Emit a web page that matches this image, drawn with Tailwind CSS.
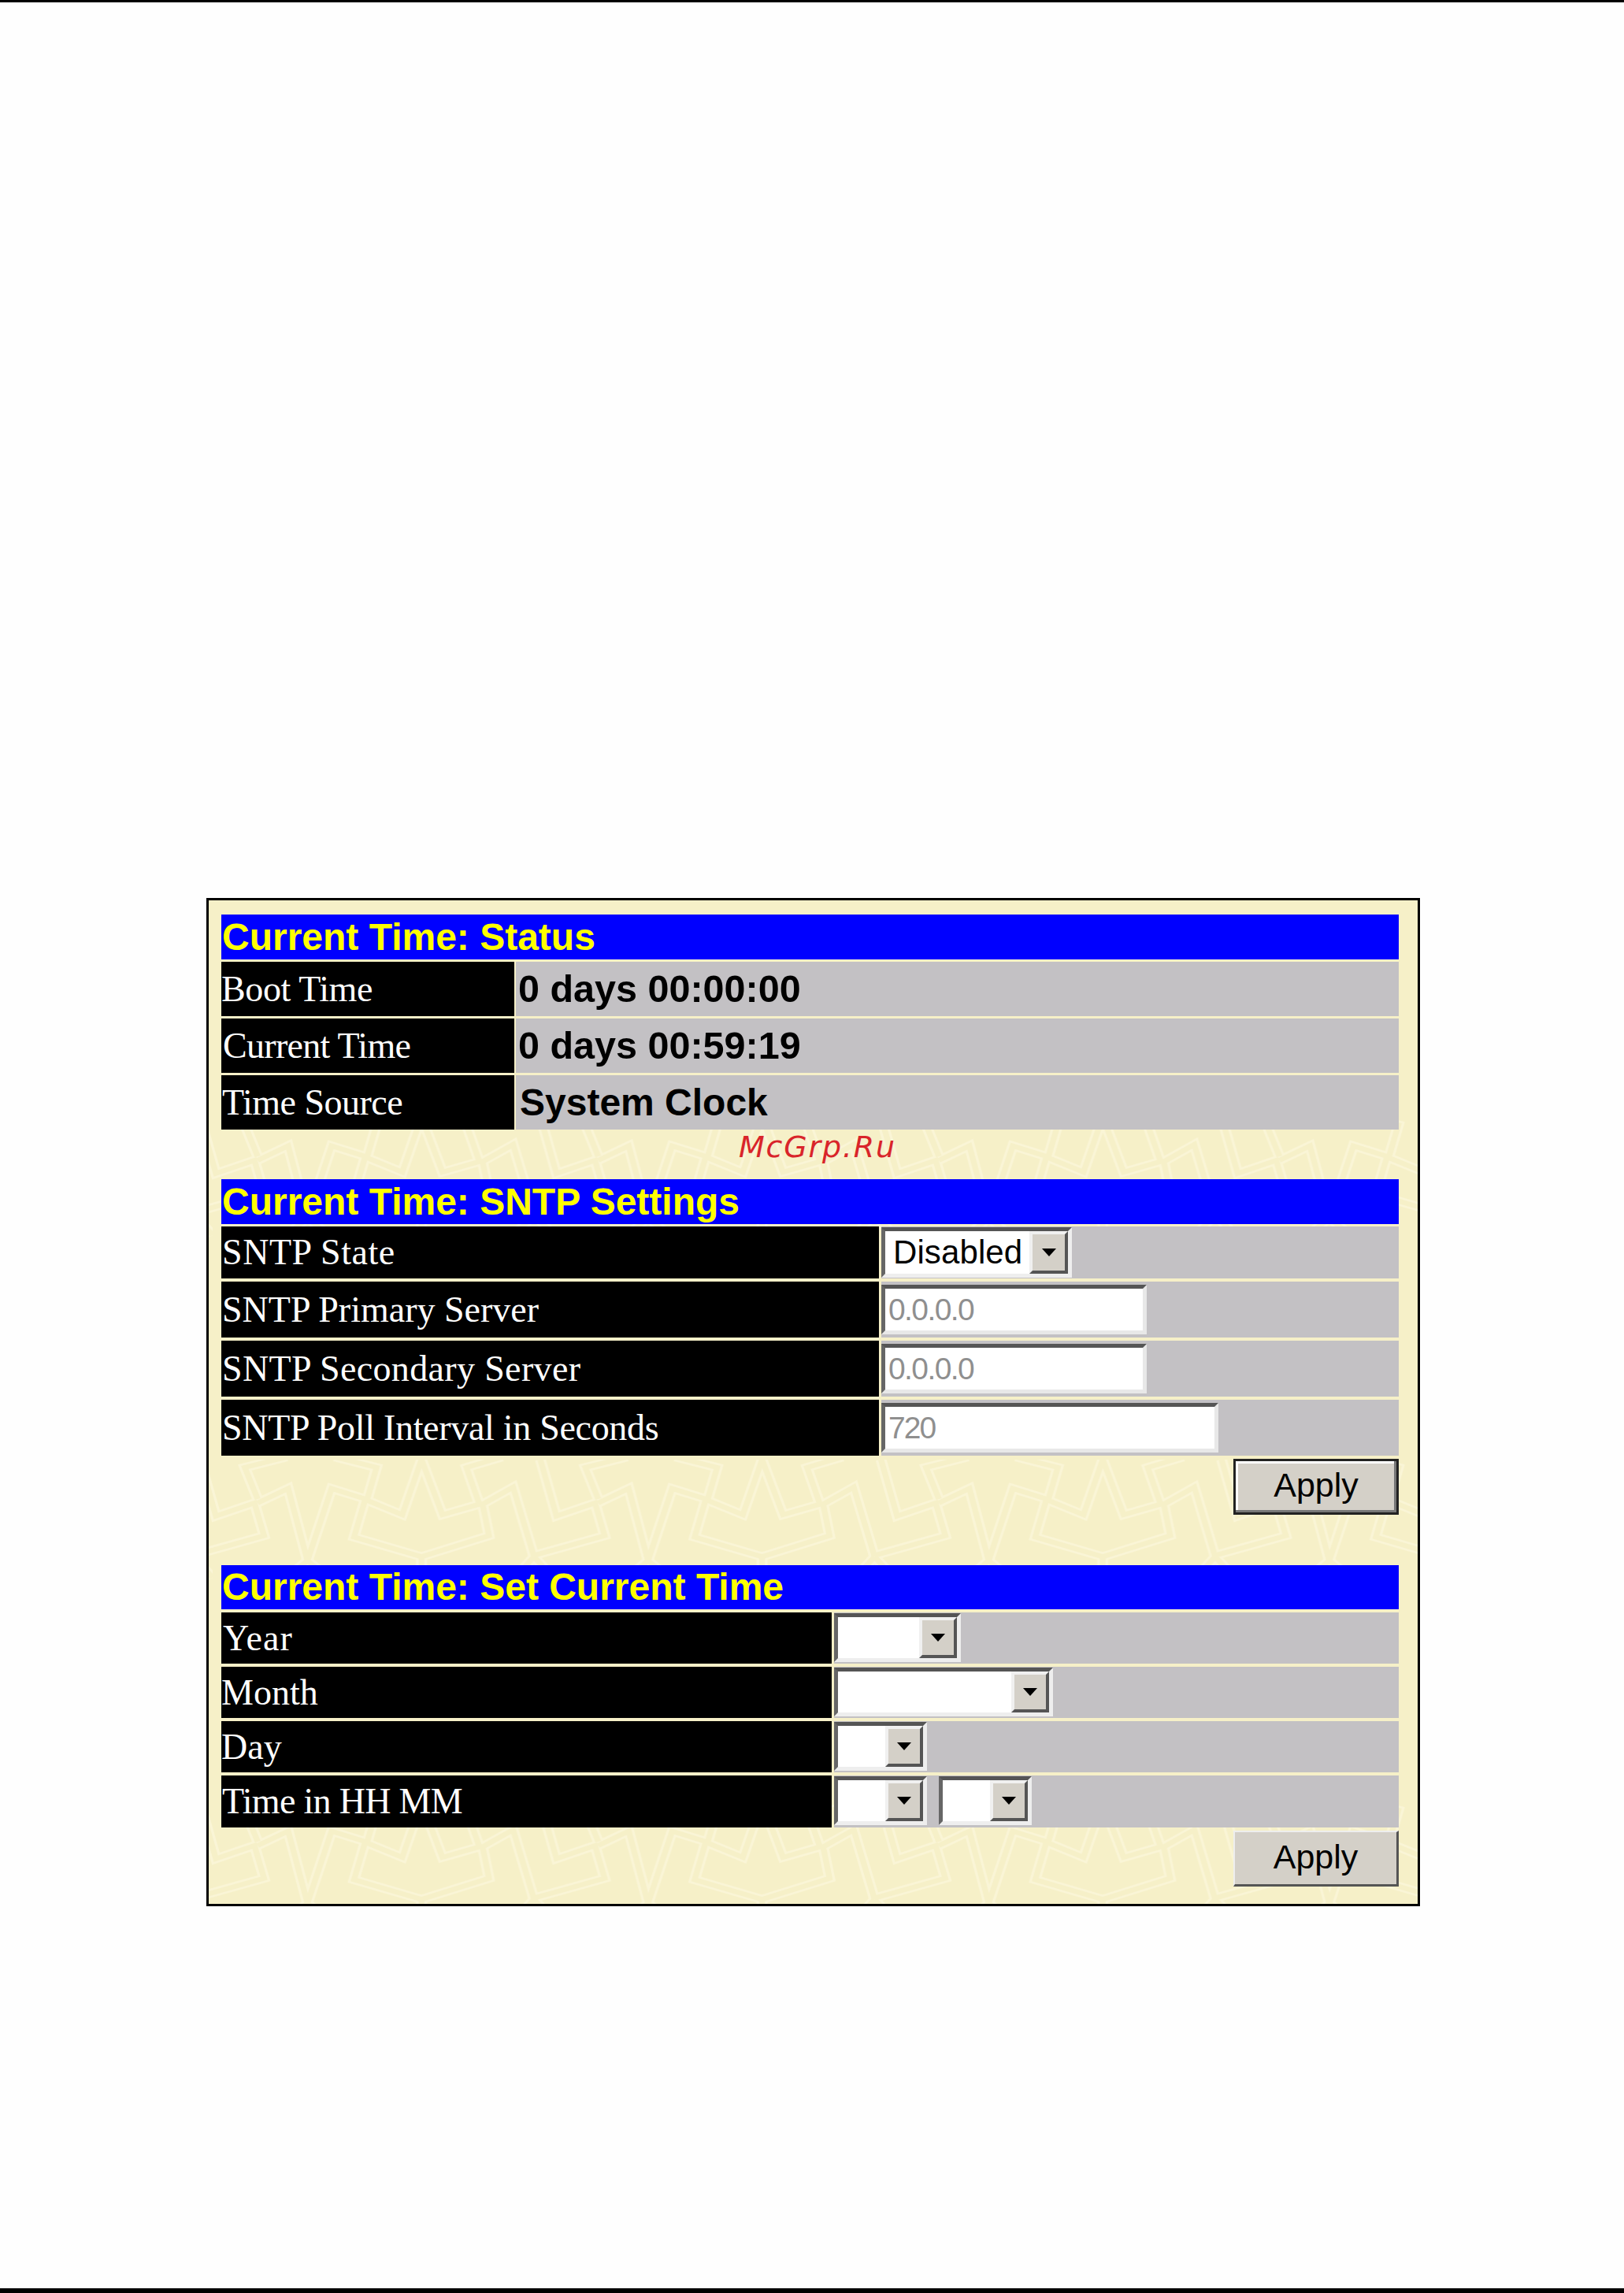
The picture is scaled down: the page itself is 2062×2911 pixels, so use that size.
<!DOCTYPE html>
<html lang="en">
<head>
    <meta charset="UTF-8">
    <title>Current Time</title>
    <script src="https://cdn.jsdelivr.net/npm/@tailwindcss/browser@4"></script>
</head>
<body class="bg-[#fefefe] h-[2911px] w-[2062px] overflow-hidden flex flex-col">
    <div class="h-[3px] bg-black"></div>

    <div class="relative ml-[262px] mt-[1137px] w-[1541px] h-[1280px] border-[3px] border-black bg-[#f6f0c8] pl-[16px] pr-[24px] pt-[18px]">
        <!-- tiled wallpaper: wide light stroke with a narrower bg stroke on top gives the double lines -->
        <svg class="absolute inset-0 w-full h-full" aria-hidden="true">
            <defs>
                <pattern id="bgtile" width="1060" height="1305" patternUnits="userSpaceOnUse" patternTransform="translate(5 710) scale(0.408 0.3333)">
                    <g fill="none" stroke="#faf5d6" stroke-width="34" stroke-linejoin="miter">
                        <path d="M-40 0L10 215L130 165L160 290L-60 365"/>
                        <path d="M1020 0L1070 215L1190 165L1220 290L1000 365"/>
                        <path d="M140 165L235 110L295 385L370 110L475 150L440 295L650 370L860 290L840 170L935 105L1000 370"/>
                        <path d="M140 150L100 30L230 -10M380 -10L510 30L480 155L590 210L650 0L715 210L830 170L790 30L900 -10"/>
                        <path d="M295 385L230 450M295 385L360 450M650 370L650 450M1000 370L940 450M1000 370L1060 450"/>
                    </g>
                    <g fill="none" stroke="#f6f0c8" stroke-width="18" stroke-linejoin="miter">
                        <path d="M-40 0L10 215L130 165L160 290L-60 365"/>
                        <path d="M1020 0L1070 215L1190 165L1220 290L1000 365"/>
                        <path d="M140 165L235 110L295 385L370 110L475 150L440 295L650 370L860 290L840 170L935 105L1000 370"/>
                        <path d="M140 150L100 30L230 -10M380 -10L510 30L480 155L590 210L650 0L715 210L830 170L790 30L900 -10"/>
                        <path d="M295 385L230 450M295 385L360 450M650 370L650 450M1000 370L940 450M1000 370L1060 450"/>
                    </g>
                </pattern>
            </defs>
            <rect width="100%" height="100%" fill="url(#bgtile)"/>
        </svg>

        <div class="relative">
            <!-- status -->
            <div class="h-[57px] bg-[#0000ff] text-[#ffff00] text-[48px] font-bold leading-[57px] pl-[1px] font-['Liberation_Sans',sans-serif] whitespace-nowrap">Current Time: Status</div>
            <div class="mt-[3px] flex flex-col gap-[3px]">
                <div class="flex h-[69px] gap-[2px]">
                    <div class="w-[372px] bg-black text-white text-[46px] leading-[69px] tracking-[-0.4px] font-['Liberation_Serif',serif]">Boot Time</div>
                    <div class="flex-1 bg-[#c3c1c4] text-black text-[48.5px] font-bold leading-[69px] pl-[3px] font-['Liberation_Sans',sans-serif]">0 days 00:00:00</div>
                </div>
                <div class="flex h-[69px] gap-[2px]">
                    <div class="w-[372px] bg-black text-white text-[46px] leading-[69px] pl-[2px] tracking-[-0.7px] font-['Liberation_Serif',serif]">Current Time</div>
                    <div class="flex-1 bg-[#c3c1c4] text-black text-[48.5px] font-bold leading-[69px] pl-[3px] font-['Liberation_Sans',sans-serif]">0 days 00:59:19</div>
                </div>
                <div class="flex h-[69px] gap-[2px]">
                    <div class="w-[372px] bg-black text-white text-[46px] leading-[69px] pl-[1px] tracking-[-0.5px] font-['Liberation_Serif',serif]">Time Source</div>
                    <div class="flex-1 bg-[#c3c1c4] text-black text-[48px] font-bold leading-[69px] pl-[5px] font-['Liberation_Sans',sans-serif]">System Clock</div>
                </div>
            </div>

            <!-- sntp -->
            <div class="mt-[63px] h-[57px] bg-[#0000ff] text-[#ffff00] text-[48px] font-bold leading-[57px] pl-[1px] font-['Liberation_Sans',sans-serif] whitespace-nowrap">Current Time: SNTP Settings</div>
            <div class="mt-[3px] flex flex-col gap-[4px]">
                <div class="flex h-[66px] gap-[3px]">
                    <div class="w-[835px] bg-black text-white text-[46px] leading-[66px] pl-[1px] tracking-[0.55px] font-['Liberation_Serif',serif]">SNTP State</div>
                    <div class="flex-1 bg-[#c3c1c4] flex items-start pt-[1px]">
                        <div class="w-[242px] h-[64px] bg-white border-[5px] border-t-[#555] border-l-[#666] border-r-[#eeeeee] border-b-[#eeeeee] flex items-start">
                            <span class="flex-1 pl-[10px] text-[42px] leading-[54px] tracking-[0.1px] text-black font-['Liberation_Sans',sans-serif]">Disabled</span>
                            <div class="w-[49px] h-[54px] bg-[#d4d0c8] border-[4px] border-t-[#f0f0f0] border-l-[#f0f0f0] border-r-[#555] border-b-[#555] flex items-center justify-center">
                                <svg width="20" height="12" viewBox="0 0 20 12"><path d="M1 1H19L10 11Z" fill="#000"/></svg>
                            </div>
                        </div>
                    </div>
                </div>
                <div class="flex h-[71px] gap-[3px]">
                    <div class="w-[835px] bg-black text-white text-[46px] leading-[71px] pl-[1px] font-['Liberation_Serif',serif]">SNTP Primary Server</div>
                    <div class="flex-1 bg-[#c3c1c4] flex items-center">
                        <div class="w-[337px] h-[63px] bg-white border-[5px] border-t-[#555] border-l-[#666] border-r-[#e8e8e8] border-b-[#e8e8e8] text-[#8f8f8f] text-[39px] leading-[53px] tracking-[-1.6px] pl-[4px] font-['Liberation_Sans',sans-serif]">0.0.0.0</div>
                    </div>
                </div>
                <div class="flex h-[71px] gap-[3px]">
                    <div class="w-[835px] bg-black text-white text-[46px] leading-[71px] pl-[1px] tracking-[0.35px] font-['Liberation_Serif',serif]">SNTP Secondary Server</div>
                    <div class="flex-1 bg-[#c3c1c4] flex items-center">
                        <div class="w-[337px] h-[63px] bg-white border-[5px] border-t-[#555] border-l-[#666] border-r-[#e8e8e8] border-b-[#e8e8e8] text-[#8f8f8f] text-[39px] leading-[53px] tracking-[-1.6px] pl-[4px] font-['Liberation_Sans',sans-serif]">0.0.0.0</div>
                    </div>
                </div>
                <div class="flex h-[71px] gap-[3px]">
                    <div class="w-[835px] bg-black text-white text-[46px] leading-[71px] pl-[1px] tracking-[-0.3px] font-['Liberation_Serif',serif]">SNTP Poll Interval in Seconds</div>
                    <div class="flex-1 bg-[#c3c1c4] flex items-center">
                        <div class="w-[428px] h-[63px] bg-white border-[5px] border-t-[#555] border-l-[#666] border-r-[#e8e8e8] border-b-[#e8e8e8] text-[#8f8f8f] text-[39px] leading-[53px] tracking-[-2px] pl-[4px] font-['Liberation_Sans',sans-serif]">720</div>
                    </div>
                </div>
            </div>
            <div class="mt-[4px] flex justify-end">
                <div class="w-[210px] h-[71px] bg-[#d4d0c8] border-[3px] border-[#222] shadow-[inset_-3px_-3px_0_#777,inset_3px_3px_0_#fff] text-black text-[43px] leading-[61px] text-center font-['Liberation_Sans',sans-serif]">Apply</div>
            </div>

            <!-- set time -->
            <div class="mt-[64px] h-[56px] bg-[#0000ff] text-[#ffff00] text-[48px] font-bold leading-[56px] pl-[1px] font-['Liberation_Sans',sans-serif] whitespace-nowrap">Current Time: Set Current Time</div>
            <div class="mt-[4px] flex flex-col gap-[4px]">
                <div class="flex h-[65px] gap-[3px]">
                    <div class="w-[775px] bg-black text-white text-[46px] leading-[65px] pl-[2px] tracking-[1px] font-['Liberation_Serif',serif]">Year</div>
                    <div class="flex-1 bg-[#c3c1c4] flex items-start pt-[1px]">
                        <div class="w-[161px] h-[62px] bg-white border-[5px] border-t-[#555] border-l-[#666] border-r-[#eeeeee] border-b-[#eeeeee] flex justify-end">
                            <div class="w-[48px] h-[52px] bg-[#d4d0c8] border-[4px] border-t-[#f0f0f0] border-l-[#f0f0f0] border-r-[#555] border-b-[#555] flex items-center justify-center">
                                <svg width="20" height="12" viewBox="0 0 20 12"><path d="M1 1H19L10 11Z" fill="#000"/></svg>
                            </div>
                        </div>
                    </div>
                </div>
                <div class="flex h-[65px] gap-[3px]">
                    <div class="w-[775px] bg-black text-white text-[46px] leading-[65px] font-['Liberation_Serif',serif]">Month</div>
                    <div class="flex-1 bg-[#c3c1c4] flex items-start pt-[1px]">
                        <div class="w-[278px] h-[62px] bg-white border-[5px] border-t-[#555] border-l-[#666] border-r-[#eeeeee] border-b-[#eeeeee] flex justify-end">
                            <div class="w-[48px] h-[52px] bg-[#d4d0c8] border-[4px] border-t-[#f0f0f0] border-l-[#f0f0f0] border-r-[#555] border-b-[#555] flex items-center justify-center">
                                <svg width="20" height="12" viewBox="0 0 20 12"><path d="M1 1H19L10 11Z" fill="#000"/></svg>
                            </div>
                        </div>
                    </div>
                </div>
                <div class="flex h-[65px] gap-[3px]">
                    <div class="w-[775px] bg-black text-white text-[46px] leading-[65px] font-['Liberation_Serif',serif]">Day</div>
                    <div class="flex-1 bg-[#c3c1c4] flex items-start pt-[1px]">
                        <div class="w-[118px] h-[62px] bg-white border-[5px] border-t-[#555] border-l-[#666] border-r-[#eeeeee] border-b-[#eeeeee] flex justify-end">
                            <div class="w-[48px] h-[52px] bg-[#d4d0c8] border-[4px] border-t-[#f0f0f0] border-l-[#f0f0f0] border-r-[#555] border-b-[#555] flex items-center justify-center">
                                <svg width="20" height="12" viewBox="0 0 20 12"><path d="M1 1H19L10 11Z" fill="#000"/></svg>
                            </div>
                        </div>
                    </div>
                </div>
                <div class="flex h-[66px] gap-[3px]">
                    <div class="w-[775px] bg-black text-white text-[46px] leading-[66px] pl-[1px] tracking-[-0.7px] font-['Liberation_Serif',serif]">Time in HH MM</div>
                    <div class="flex-1 bg-[#c3c1c4] flex items-start pt-[1px] gap-[15px]">
                        <div class="w-[118px] h-[62px] bg-white border-[5px] border-t-[#555] border-l-[#666] border-r-[#eeeeee] border-b-[#eeeeee] flex justify-end">
                            <div class="w-[48px] h-[52px] bg-[#d4d0c8] border-[4px] border-t-[#f0f0f0] border-l-[#f0f0f0] border-r-[#555] border-b-[#555] flex items-center justify-center">
                                <svg width="20" height="12" viewBox="0 0 20 12"><path d="M1 1H19L10 11Z" fill="#000"/></svg>
                            </div>
                        </div>
                        <div class="w-[118px] h-[62px] bg-white border-[5px] border-t-[#555] border-l-[#666] border-r-[#eeeeee] border-b-[#eeeeee] flex justify-end">
                            <div class="w-[48px] h-[52px] bg-[#d4d0c8] border-[4px] border-t-[#f0f0f0] border-l-[#f0f0f0] border-r-[#555] border-b-[#555] flex items-center justify-center">
                                <svg width="20" height="12" viewBox="0 0 20 12"><path d="M1 1H19L10 11Z" fill="#000"/></svg>
                            </div>
                        </div>
                    </div>
                </div>
            </div>
            <div class="mt-[4px] flex justify-end">
                <div class="w-[210px] h-[71px] bg-[#d4d0c8] border-t-[2px] border-l-[2px] border-t-[#eee] border-l-[#eee] border-r-[3px] border-b-[3px] border-r-[#555] border-b-[#555] text-black text-[43px] leading-[62px] text-center font-['Liberation_Sans',sans-serif]">Apply</div>
            </div>
        </div>

        <!-- watermark sits over the panel -->
        <div class="absolute left-[673px] top-[291px] text-[#d9242a] text-[38px] leading-[44px] italic tracking-[1.8px] font-['DejaVu_Sans',sans-serif] whitespace-nowrap">McGrp.Ru</div>
    </div>

    <div class="mt-auto h-[6px] bg-black"></div>
</body>
</html>
